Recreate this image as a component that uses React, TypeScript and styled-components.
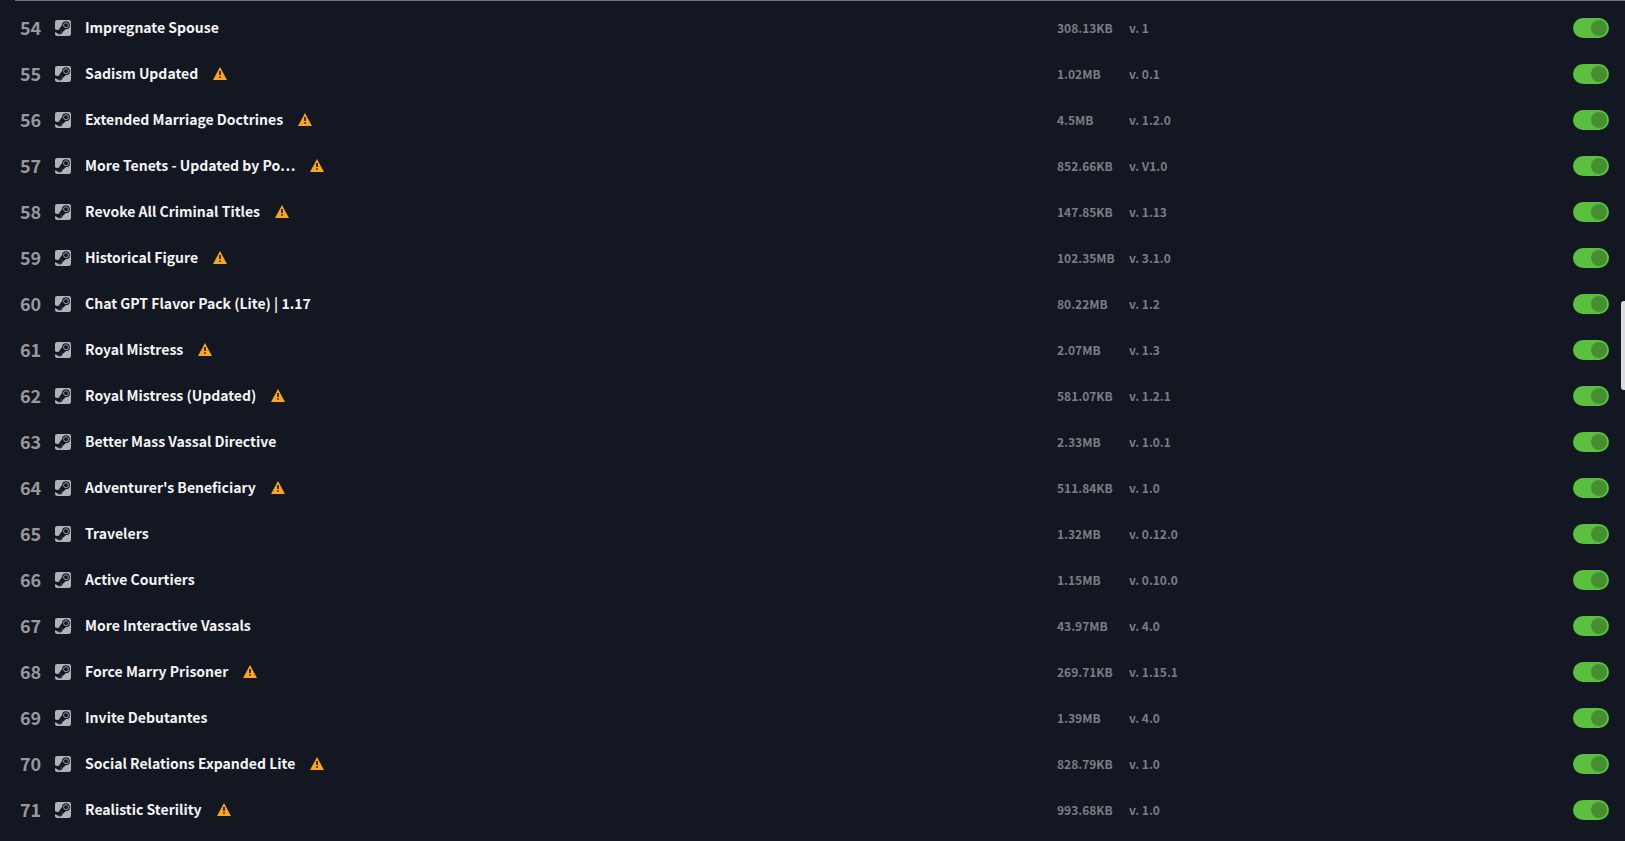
import React, { useState } from 'react';
import styled, { createGlobalStyle } from 'styled-components';

interface Mod {
  position: number;
  name: string;
  size: string;
  version: string;
  warning?: boolean;
}

const mods: Mod[] = [
  { position: 54, name: 'Impregnate Spouse', size: '308.13KB', version: '1' },
  { position: 55, name: 'Sadism Updated', size: '1.02MB', version: '0.1', warning: true },
  { position: 56, name: 'Extended Marriage Doctrines', size: '4.5MB', version: '1.2.0', warning: true },
  { position: 57, name: 'More Tenets - Updated by Po…', size: '852.66KB', version: 'V1.0', warning: true },
  { position: 58, name: 'Revoke All Criminal Titles', size: '147.85KB', version: '1.13', warning: true },
  { position: 59, name: 'Historical Figure', size: '102.35MB', version: '3.1.0', warning: true },
  { position: 60, name: 'Chat GPT Flavor Pack (Lite) | 1.17', size: '80.22MB', version: '1.2' },
  { position: 61, name: 'Royal Mistress', size: '2.07MB', version: '1.3', warning: true },
  { position: 62, name: 'Royal Mistress (Updated)', size: '581.07KB', version: '1.2.1', warning: true },
  { position: 63, name: 'Better Mass Vassal Directive', size: '2.33MB', version: '1.0.1' },
  { position: 64, name: "Adventurer's Beneficiary", size: '511.84KB', version: '1.0', warning: true },
  { position: 65, name: 'Travelers', size: '1.32MB', version: '0.12.0' },
  { position: 66, name: 'Active Courtiers', size: '1.15MB', version: '0.10.0' },
  { position: 67, name: 'More Interactive Vassals', size: '43.97MB', version: '4.0' },
  { position: 68, name: 'Force Marry Prisoner', size: '269.71KB', version: '1.15.1', warning: true },
  { position: 69, name: 'Invite Debutantes', size: '1.39MB', version: '4.0' },
  { position: 70, name: 'Social Relations Expanded Lite', size: '828.79KB', version: '1.0', warning: true },
  { position: 71, name: 'Realistic Sterility', size: '993.68KB', version: '1.0', warning: true },
];

const GlobalStyle = createGlobalStyle`
  * { box-sizing: border-box; }
  body {
    margin: 0;
    background: #131722;
    color: #f4f4f5;
    font-family: "Noto Sans CJK SC", "Noto Sans", sans-serif;
  }
`;

const Panel = styled.main`
  position: relative;
  padding-left: 15px;
`;

const List = styled.ul`
  margin: 0;
  padding: 4px 16px 8px 0;
  border-top: 1px solid #6c717a;
  list-style: none;
`;

const Row = styled.li`
  display: grid;
  grid-template-columns: 40px 30px minmax(0, 1fr) 72px 444px 36px;
  align-items: center;
  height: 46px;
`;

const Position = styled.span`
  padding: 0 0 2px 5px;
  color: #97989d;
  font-size: 18px;
  font-weight: 700;
  line-height: 24px;
`;

const SteamSvg = styled.svg`
  display: block;
  width: 16px;
  height: 16px;
`;

const Title = styled.div`
  display: flex;
  align-items: center;
  gap: 15px;
  padding-bottom: 2px;
`;

const Name = styled.label`
  font-size: 14px;
  font-weight: 700;
  line-height: 20px;
  white-space: nowrap;
`;

const WarningSvg = styled.svg`
  display: block;
  flex: none;
  width: 14px;
  height: 14px;
`;

const Detail = styled.span`
  color: #7b7d84;
  font-size: 12px;
  font-weight: 700;
  line-height: 16px;
  white-space: nowrap;
`;

const Toggle = styled.input`
  appearance: none;
  display: flex;
  width: 36px;
  height: 20px;
  margin: 0;
  padding: 2px;
  border-radius: 10px;
  background: #454953;
  cursor: pointer;

  &::before {
    content: "";
    width: 16px;
    height: 16px;
    border-radius: 50%;
    background: #8d9097;
  }

  &:checked {
    justify-content: flex-end;
    background: #5bbf40;
  }

  &:checked::before {
    background: #458f31;
  }
`;

const ScrollThumb = styled.div`
  position: absolute;
  top: 301px;
  right: 0;
  width: 4px;
  height: 89px;
  border-radius: 3px 0 0 3px;
  background: #dcdcde;
`;

function SteamIcon() {
  return (
    <SteamSvg viewBox="0 0 16 16" aria-hidden>
      <rect width="16" height="16" rx="2.2" fill="#b1b2b8" />
      <g fill="#131722">
        <path d="M0 9.2 3.4 10.6 3.4 13.6 0 12.2Z" />
        <circle cx="4.8" cy="11.8" r="2.6" />
        <path d="M4 9.3 7.1 5 11 9 7 12.6Z" />
        <circle cx="11" cy="5.2" r="3.9" />
      </g>
      <circle cx="11" cy="5.2" r="2.5" fill="none" stroke="#b1b2b8" strokeWidth="0.8" />
      <path
        d="M3.4 12.9A1.8 1.8 0 1 0 4.6 10"
        fill="none"
        stroke="#b1b2b8"
        strokeOpacity="0.5"
        strokeWidth="0.5"
      />
    </SteamSvg>
  );
}

function WarningIcon() {
  return (
    <WarningSvg viewBox="0 0 14 14" aria-hidden>
      <path d="M7 0 14 13H0Z" transform="translate(0 1)" fill="#f9a51f" />
      <path d="M6.2 5h1.6v4H6.2zM6.2 10.2h1.6v1.6H6.2z" fill="#131722" />
    </WarningSvg>
  );
}

function ModRow({ mod }: { mod: Mod }) {
  const [enabled, setEnabled] = useState(true);
  const id = `mod-${mod.position}`;
  return (
    <Row>
      <Position>{mod.position}</Position>
      <SteamIcon />
      <Title>
        <Name htmlFor={id}>{mod.name}</Name>
        {mod.warning && <WarningIcon />}
      </Title>
      <Detail>{mod.size}</Detail>
      <Detail>v. {mod.version}</Detail>
      <Toggle
        id={id}
        type="checkbox"
        checked={enabled}
        onChange={(event) => setEnabled(event.target.checked)}
      />
    </Row>
  );
}

export default function App() {
  return (
    <Panel>
      <GlobalStyle />
      <List>
        {mods.map((mod) => (
          <ModRow key={mod.position} mod={mod} />
        ))}
      </List>
      <ScrollThumb />
    </Panel>
  );
}
